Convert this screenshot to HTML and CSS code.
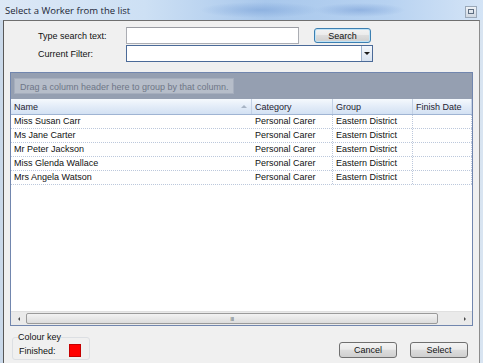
FILE: index.html
```html
<!DOCTYPE html>
<html lang="en">
<head>
  <meta charset="UTF-8">
  <title>Select a Worker from the list</title>
  <link rel="stylesheet" href="styles.css">
</head>
<body>
  <div class="window">
    <div class="titlebar">
      <span class="title">Select a Worker from the list</span>
      <span class="close-btn">
        <svg width="6" height="5" viewBox="0 0 6 5"><path d="M0 0h6v5H0z M1 1v3h4V1z" fill="#5d6d80" fill-rule="evenodd"/></svg>
      </span>
    </div>

    <div class="frame">
      <form class="search-form">
        <label>Type search text:</label>
        <input type="text" class="search-input">
        <button type="button" class="btn btn-default">Search</button>
        <label>Current Filter:</label>
        <div class="combo">
          <span class="combo-arrow"></span>
        </div>
      </form>

      <div class="grid">
        <div class="group-panel">
          <span class="group-hint">Drag a column header here to group by that column.</span>
        </div>
        <div class="grid-header">
          <div class="col-head">Name <span class="sort-arrow"></span></div>
          <div class="col-head">Category</div>
          <div class="col-head">Group</div>
          <div class="col-head">Finish Date</div>
        </div>
        <div class="grid-body">
          <div class="grid-row"><span>Miss Susan Carr</span><span>Personal Carer</span><span>Eastern District</span><span></span></div>
          <div class="grid-row"><span>Ms Jane Carter</span><span>Personal Carer</span><span>Eastern District</span><span></span></div>
          <div class="grid-row"><span>Mr Peter Jackson</span><span>Personal Carer</span><span>Eastern District</span><span></span></div>
          <div class="grid-row"><span>Miss Glenda Wallace</span><span>Personal Carer</span><span>Eastern District</span><span></span></div>
          <div class="grid-row"><span>Mrs Angela Watson</span><span>Personal Carer</span><span>Eastern District</span><span></span></div>
        </div>
        <div class="hscroll">
          <span class="arrow arrow-left"></span>
          <div class="thumb"><span class="grip">III</span></div>
          <span class="arrow arrow-right"></span>
        </div>
      </div>

      <div class="footer">
        <fieldset class="colour-key">
          <legend>Colour key</legend>
          <span class="key-label">Finished:</span>
          <span class="swatch"></span>
        </fieldset>
        <div class="buttons">
          <button type="button" class="btn">Cancel</button>
          <button type="button" class="btn">Select</button>
        </div>
        <span class="resize-grip"></span>
      </div>
    </div>
  </div>
</body>
</html>
```

FILE: styles.css
```css
body {
  margin: 0;
  padding: 0;
  overflow: hidden;
  font-family: "Liberation Sans", Arial, sans-serif;
  font-size: 9px;
  color: #111;
  background: #d3dfec;
}

.window {
  width: 483px;
  height: 363px;
  background: linear-gradient(to right, #cad9ea, #d8e4f1);
}

/* title bar */
.titlebar {
  height: 20px;
  display: flex;
  align-items: center;
  justify-content: space-between;
  padding: 0 5px;
  background:
    radial-gradient(ellipse 60px 8px at 260px 10px, rgba(120, 160, 215, 0.55), transparent),
    radial-gradient(ellipse 45px 7px at 360px 10px, rgba(110, 150, 210, 0.5), transparent),
    linear-gradient(to right, #dce8f6 0, #cde0f4 30%, #a9c8ec 55%, #b7d2f1 80%, #d4e4f6 100%);
}

.title {
  font-family: "Open Sans", "Liberation Sans", sans-serif;
  font-size: 9.5px;
  color: #1c2635;
}

.close-btn {
  width: 10px;
  height: 10px;
  border: 1px solid #9aa8b8;
  background: linear-gradient(#eef2f7, #cfd7e1);
  display: flex;
  align-items: center;
  justify-content: center;
  margin-right: 1px;
  margin-top: 3px;
}

/* dialog body */
.frame {
  margin: 0 3px;
  height: 342px;
  padding: 0 6px;
  background: #f0f0f0;
  border-left: 1px solid #585858;
  border-right: 1px solid #8c8c8c;
  border-top: 1px solid #6f6f6f;
}

.search-form {
  display: grid;
  grid-template-columns: 88px 173px 72px;
  grid-auto-rows: 17px;
  row-gap: 1px;
  align-items: center;
  margin: 6px 0 10px 28px;
}

.search-input {
  height: 17px;
  box-sizing: border-box;
  border: 1px solid #abadb3;
  border-top-color: #9a9ca3;
  background: #fff;
  margin: 0;
  padding: 0;
}

.combo {
  grid-column: 2 / span 2;
  width: 247px;
  height: 17px;
  box-sizing: border-box;
  border: 1px solid #4b6a98;
  background: #fff;
  display: flex;
  justify-content: flex-end;
}

.combo-arrow {
  width: 10px;
  border-left: 1px solid #9fb2cc;
  background: linear-gradient(#f4f7fb, #d9e3f0);
  display: flex;
  align-items: center;
  justify-content: center;
}

.combo-arrow::after {
  content: "";
  border-left: 3px solid transparent;
  border-right: 3px solid transparent;
  border-top: 3px solid #1b1b1b;
}

.btn {
  height: 16px;
  width: 58px;
  padding: 0;
  font-family: "Liberation Sans", Arial, sans-serif;
  font-size: 9px;
  color: #111;
  border: 1px solid #707070;
  border-radius: 3px;
  background: linear-gradient(#f3f3f3 0, #ebebeb 45%, #dddddd 50%, #cfcfcf 100%);
}

.btn-default {
  margin-left: 15px;
  width: 57px;
  height: 15px;
  border-color: #3c7fb1;
  box-shadow: inset 0 0 0 1px #bfe3f7;
}

/* data grid */
.grid {
  height: 254px;
  box-sizing: border-box;
  border: 1px solid #7186ae;
  display: flex;
  flex-direction: column;
  background: #fff;
}

.group-panel {
  height: 26px;
  box-sizing: border-box;
  padding: 5px 0 0 3px;
  background: #959fb1;
}

.group-hint {
  display: inline-block;
  width: 220px;
  height: 16px;
  line-height: 16px;
  box-sizing: border-box;
  padding-left: 5px;
  background: #b6bdc9;
  border: 1px solid #a6aebd;
  color: #6e7687;
}

.grid-header,
.grid-row {
  display: grid;
  grid-template-columns: 241px 81px 80px 1fr;
}

.grid-header {
  height: 16px;
  box-sizing: border-box;
  background: linear-gradient(#f5f9fd 0, #e3ecf8 50%, #d3e1f3 100%);
  border-bottom: 1px solid #9fb4d3;
}

.col-head {
  display: flex;
  align-items: center;
  justify-content: space-between;
  padding: 0 4px 0 3px;
  border-right: 1px solid #c3d1e5;
  color: #1e2230;
}

.sort-arrow {
  border-left: 3px solid transparent;
  border-right: 3px solid transparent;
  border-bottom: 3px solid #a8b4c4;
}

.grid-body {
  flex: 1;
}

.grid-row {
  height: 14px;
  box-sizing: border-box;
  border-bottom: 1px dotted #bcc8dc;
  line-height: 13px;
}

.grid-row span {
  padding-left: 3px;
  border-right: 1px dotted #bcc8dc;
  white-space: nowrap;
}

.grid-row span:first-child {
  border-right-color: transparent;
}

.hscroll {
  height: 13px;
  display: flex;
  align-items: center;
  background: #eaeaea;
  border-top: 1px solid #e0e0e0;
}

.arrow {
  width: 15px;
  display: flex;
  justify-content: center;
}

.arrow-left::after {
  content: "";
  border-top: 2px solid transparent;
  border-bottom: 2px solid transparent;
  border-right: 2px solid #4a4a4a;
}

.arrow-right::after {
  content: "";
  border-top: 2px solid transparent;
  border-bottom: 2px solid transparent;
  border-left: 2px solid #4a4a4a;
}

.arrow-right {
  margin-left: auto;
}

.thumb {
  width: 412px;
  height: 11px;
  box-sizing: border-box;
  border: 1px solid #9a9a9a;
  border-radius: 2px;
  background: linear-gradient(#f3f3f3, #dcdcdc);
  display: flex;
  align-items: center;
  justify-content: center;
}

.grip {
  font-size: 6px;
  color: #6b6b6b;
  letter-spacing: -0.5px;
}

/* footer */
.footer {
  display: flex;
  justify-content: space-between;
  align-items: flex-start;
  padding: 6px 5px 0 2px;
}

.colour-key {
  width: 78px;
  height: 28px;
  box-sizing: border-box;
  margin: 0;
  padding: 0 0 0 6px;
  border: 1px solid #dcdfe3;
  border-radius: 3px;
  display: flex;
  align-items: center;
}

.colour-key legend {
  padding: 0;
  margin-left: -1px;
  font-size: 9px;
  color: #111;
}

.key-label {
  width: 50px;
}

.swatch {
  width: 12px;
  height: 13px;
  box-sizing: border-box;
  background: #ff0000;
  border: 1px solid #c40000;
}

.buttons {
  display: flex;
  gap: 13px;
  margin-top: 10px;
}

.resize-grip {
  display: none;
}
```
